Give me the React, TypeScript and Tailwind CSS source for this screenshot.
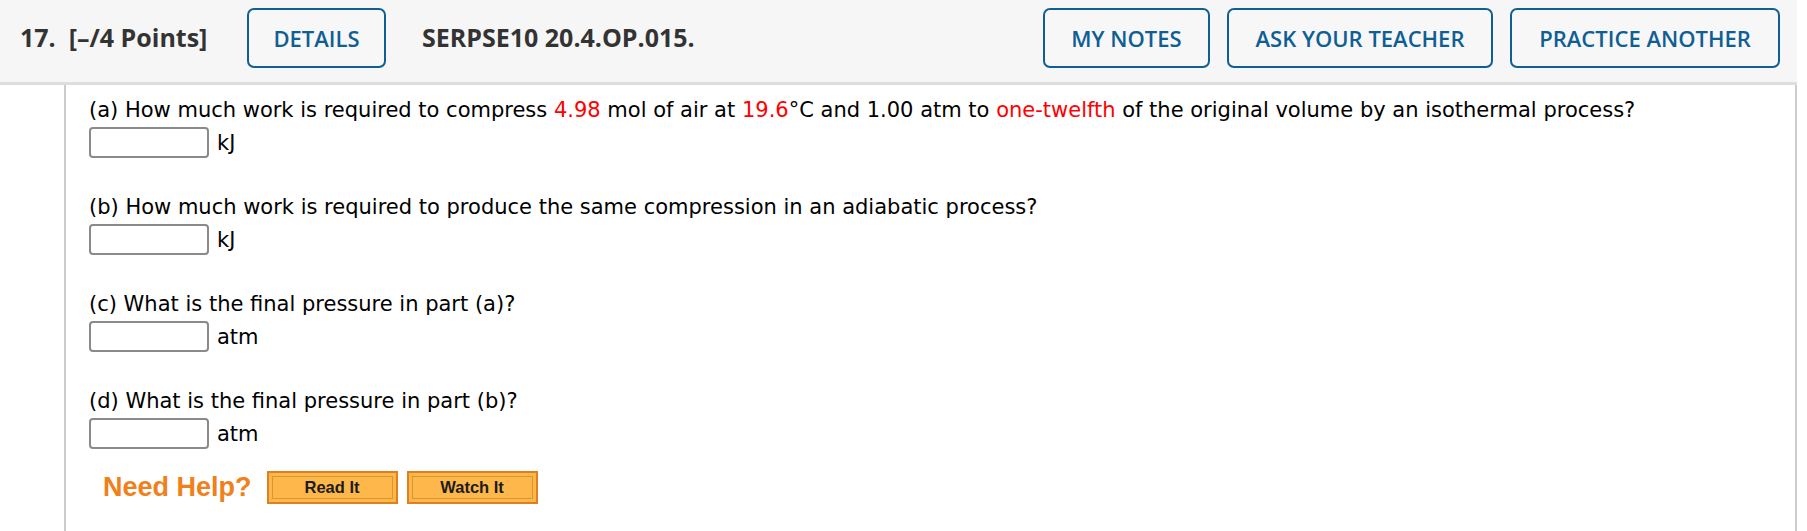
import React from 'react'

const questions = [
  {
    key: 'a',
    unit: 'kJ',
    text: (
      <>
        (a) How much work is required to compress <span className="text-[#ff0000]">4.98</span> mol of air at{' '}
        <span className="text-[#ff0000]">19.6</span>°C and 1.00 atm to{' '}
        <span className="text-[#ff0000]">one-twelfth</span> of the original volume by an isothermal process?
      </>
    ),
  },
  {
    key: 'b',
    unit: 'kJ',
    text: <>(b) How much work is required to produce the same compression in an adiabatic process?</>,
  },
  { key: 'c', unit: 'atm', text: <>(c) What is the final pressure in part (a)?</> },
  { key: 'd', unit: 'atm', text: <>(d) What is the final pressure in part (b)?</> },
]

const OutlineButton = ({ label, width }: { label: string; width: string }) => (
  <button
    className={`flex h-[60px] ${width} items-center justify-center rounded-[7px] border-2 border-[#0f5f94] bg-[#f7f7f7] text-[22px] font-semibold text-[#0f5f94]`}
  >
    {label}
  </button>
)

const HelpButton = ({ label }: { label: string }) => (
  <button className="h-[33px] w-[131px] border-2 border-[#e07f1f] bg-[#fdb74b] p-[3px]">
    <span className="flex h-full w-full items-center justify-center border border-[#d9962f] font-['Liberation_Sans',Arial,sans-serif] text-[16.5px] font-bold text-[#1c1c1c]">
      {label}
    </span>
  </button>
)

export default function App() {
  return (
    <div className="h-[531px] w-full overflow-hidden bg-white">
      <div className="w-[1797px]">
        {/* HEADER */}
        <div className="flex h-[85px] items-center border-b-[3px] border-[#dedede] bg-[#f6f6f6] pb-[6px] pl-[20px] pr-[17px] font-['Open_Sans',sans-serif]">
          <div className="w-[227px] text-[25px] font-bold text-[#333]">17.&nbsp; [–/4 Points]</div>
          <OutlineButton label="DETAILS" width="w-[139px]" />
          <div className="ml-[36px] text-[25px] font-bold text-[#333]">SERPSE10 20.4.OP.015.</div>
          <div className="ml-auto flex gap-[17px]">
            <OutlineButton label="MY NOTES" width="w-[167px]" />
            <OutlineButton label="ASK YOUR TEACHER" width="w-[266px]" />
            <OutlineButton label="PRACTICE ANOTHER" width="w-[270px]" />
          </div>
        </div>

        {/* BODY */}
        <div className="ml-[64px] h-[446px] border-x-2 border-[#cccccc] pl-[23px] pt-[13px] font-['DejaVu_Sans',Verdana,sans-serif] text-[21px] text-black">
          {questions.map((q) => (
            <div key={q.key} className="mb-[37px]">
              <div className="leading-[24px]">{q.text}</div>
              <div className="mt-[5px] flex items-center gap-[8px]">
                <input className="h-[31px] w-[120px] rounded-[4px] border-2 border-[#8a8a8a] bg-white" />
                <span className="leading-[24px]">{q.unit}</span>
              </div>
            </div>
          ))}
          <div className="-mt-[19px] flex items-center gap-[9px] pl-[14px]">
            <span className="mr-[6px] font-['Liberation_Sans',Arial,sans-serif] text-[27px] font-bold text-[#f0801a]">
              Need Help?
            </span>
            <HelpButton label="Read It" />
            <HelpButton label="Watch It" />
          </div>
        </div>
      </div>
    </div>
  )
}
